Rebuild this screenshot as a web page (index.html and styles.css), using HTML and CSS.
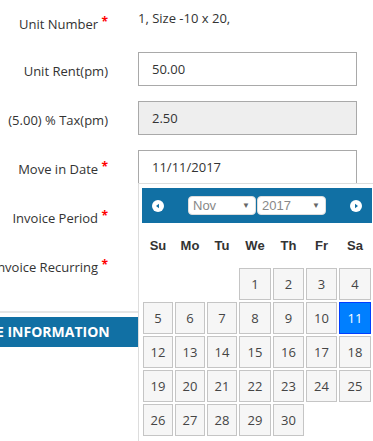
FILE: index.html
```html
<!DOCTYPE html>
<html>
<head>
<meta charset="utf-8">
<link rel="stylesheet" href="styles.css">
</head>
<body>
<div class="page">
  <div class="form">
    <div class="row row-first">
      <div class="lbl">Unit Number <span class="req">*</span></div>
      <div class="field static">1, Size -10 x 20,</div>
    </div>
    <div class="row">
      <div class="lbl">Unit Rent(pm)</div>
      <div class="field"><div class="input">50.00</div></div>
    </div>
    <div class="row">
      <div class="lbl">(5.00) % Tax(pm)</div>
      <div class="field"><div class="input readonly">2.50</div></div>
    </div>
    <div class="row">
      <div class="lbl">Move in Date <span class="req">*</span></div>
      <div class="field"><div class="input">11/11/2017</div></div>
    </div>
    <div class="row">
      <div class="lbl">Invoice Period <span class="req">*</span></div>
      <div class="field"></div>
    </div>
    <div class="row">
      <div class="lbl">Invoice Recurring <span class="req">*</span></div>
      <div class="field"></div>
    </div>
    <div class="divider"></div>
    <div class="section-bar">E INFORMATION</div>
  </div>

  <div class="datepicker">
    <div class="dp-header">
      <span class="dp-nav">
        <svg width="12" height="12" viewBox="0 0 12 12"><circle cx="6" cy="6" r="6" fill="#fff"/><path d="M4 6 L7 3.8 L7 8.2 Z" fill="#1170a4"/></svg>
      </span>
      <div class="dp-selects">
        <div class="dp-select sel-month"><span>Nov</span><span class="caret">&#9660;</span></div>
        <div class="dp-select sel-year"><span>2017</span><span class="caret">&#9660;</span></div>
      </div>
      <span class="dp-nav">
        <svg width="12" height="12" viewBox="0 0 12 12"><circle cx="6" cy="6" r="6" fill="#fff"/><path d="M8 6 L5 3.8 L5 8.2 Z" fill="#1170a4"/></svg>
      </span>
    </div>
    <table class="dp-table">
      <colgroup>
        <col class="c32"><col class="c32"><col class="c32"><col class="c34"><col class="c33"><col class="c33"><col class="c34">
      </colgroup>
      <thead>
        <tr><th>Su</th><th>Mo</th><th>Tu</th><th>We</th><th>Th</th><th>Fr</th><th>Sa</th></tr>
      </thead>
      <tbody>
        <tr><td></td><td></td><td></td><td><a>1</a></td><td><a>2</a></td><td><a>3</a></td><td><a>4</a></td></tr>
        <tr><td><a>5</a></td><td><a>6</a></td><td><a>7</a></td><td><a>8</a></td><td><a>9</a></td><td><a>10</a></td><td><a class="active">11</a></td></tr>
        <tr><td><a>12</a></td><td><a>13</a></td><td><a>14</a></td><td><a>15</a></td><td><a>16</a></td><td><a>17</a></td><td><a>18</a></td></tr>
        <tr><td><a>19</a></td><td><a>20</a></td><td><a>21</a></td><td><a>22</a></td><td><a>23</a></td><td><a>24</a></td><td><a>25</a></td></tr>
        <tr><td><a>26</a></td><td><a>27</a></td><td><a>28</a></td><td><a>29</a></td><td><a>30</a></td><td></td><td></td></tr>
      </tbody>
    </table>
  </div>
</div>
</body>
</html>
```

FILE: styles.css
```css
html, body {
  margin: 0;
  padding: 0;
  background: #fff;
}
body {
  overflow: hidden;
  font-family: "Open Sans", "Liberation Sans", sans-serif;
  font-size: 13px;
  color: #333;
}
.page {
  position: relative;
  width: 373px;
  height: 441px;
  overflow: hidden;
}
.form {
  margin-left: -20px;
  width: 420px;
}
.row {
  display: flex;
  align-items: flex-start;
  gap: 30px;
  height: 34px;
  margin-bottom: 15px;
}
.row-first {
  margin-top: 5px;
  margin-bottom: 13px;
}
.lbl {
  flex: 0 0 128px;
  text-align: right;
  white-space: nowrap;
  padding-top: 10px;
  line-height: 18px;
  direction: rtl;
}
.lbl, .lbl * {
  unicode-bidi: plaintext;
}
.req {
  color: #f00;
  font-weight: bold;
  font-size: 12px;
  position: relative;
  top: -3px;
}
.field {
  flex: 0 0 219px;
}
.static {
  padding-top: 4px;
  line-height: 18px;
}
.input {
  box-sizing: border-box;
  height: 34px;
  width: 219px;
  border: 1px solid #a9a9a9;
  padding: 0 13px;
  line-height: 32px;
  background: #fff;
  color: #333;
}
.input.readonly {
  background: #eee;
}
.divider {
  margin-top: 29px;
  height: 2px;
  background: #e6e6e6;
}
.section-bar {
  margin-top: 4px;
  height: 30px;
  line-height: 30px;
  background: #1170a4;
  color: #fff;
  font-weight: bold;
  font-size: 14px;
  padding-left: 16px;
}

/* datepicker overlay */
.datepicker {
  position: absolute;
  left: 138px;
  top: 183px;
  width: 238px;
  height: 270px;
  box-sizing: border-box;
  border: 1px solid #ddd;
  background: #fff;
  padding: 4px 3px 3px 3px;
  z-index: 2;
}
.dp-header {
  height: 35px;
  background: #1170a4;
  display: flex;
  align-items: center;
  justify-content: space-between;
  padding: 0 10px;
}
.dp-nav {
  display: flex;
  width: 12px;
  height: 12px;
}
.dp-selects {
  display: flex;
  gap: 1px;
}
.dp-select {
  box-sizing: border-box;
  height: 19px;
  background: #fff;
  border: 1px solid #ddd;
  border-radius: 4px;
  display: flex;
  align-items: center;
  justify-content: space-between;
  padding: 0 5px 0 4px;
  font-family: "Liberation Sans", Arial, sans-serif;
  font-size: 13px;
  color: #888;
}
.sel-month { width: 68px; }
.sel-year { width: 69px; }
.caret {
  font-size: 8px;
  color: #666;
}
.dp-table {
  border-collapse: collapse;
  table-layout: fixed;
  width: 230px;
}
.c32 { width: 32px; }
.c33 { width: 33px; }
.c34 { width: 34px; }
.dp-table th {
  height: 44px;
  padding: 0;
  font-family: "Liberation Sans", Arial, sans-serif;
  font-weight: bold;
  font-size: 13px;
  color: #333;
  text-align: center;
}
.dp-table td {
  padding: 1px;
  height: 32px;
}
.dp-table a {
  display: block;
  box-sizing: border-box;
  height: 32px;
  line-height: 30px;
  border: 1px solid #c5c5c5;
  background: #f6f6f6;
  color: #454545;
  text-align: center;
  font-size: 13px;
}
.dp-table a.active {
  border-color: #003eff;
  background: #007fff;
  color: #fff;
}
```
